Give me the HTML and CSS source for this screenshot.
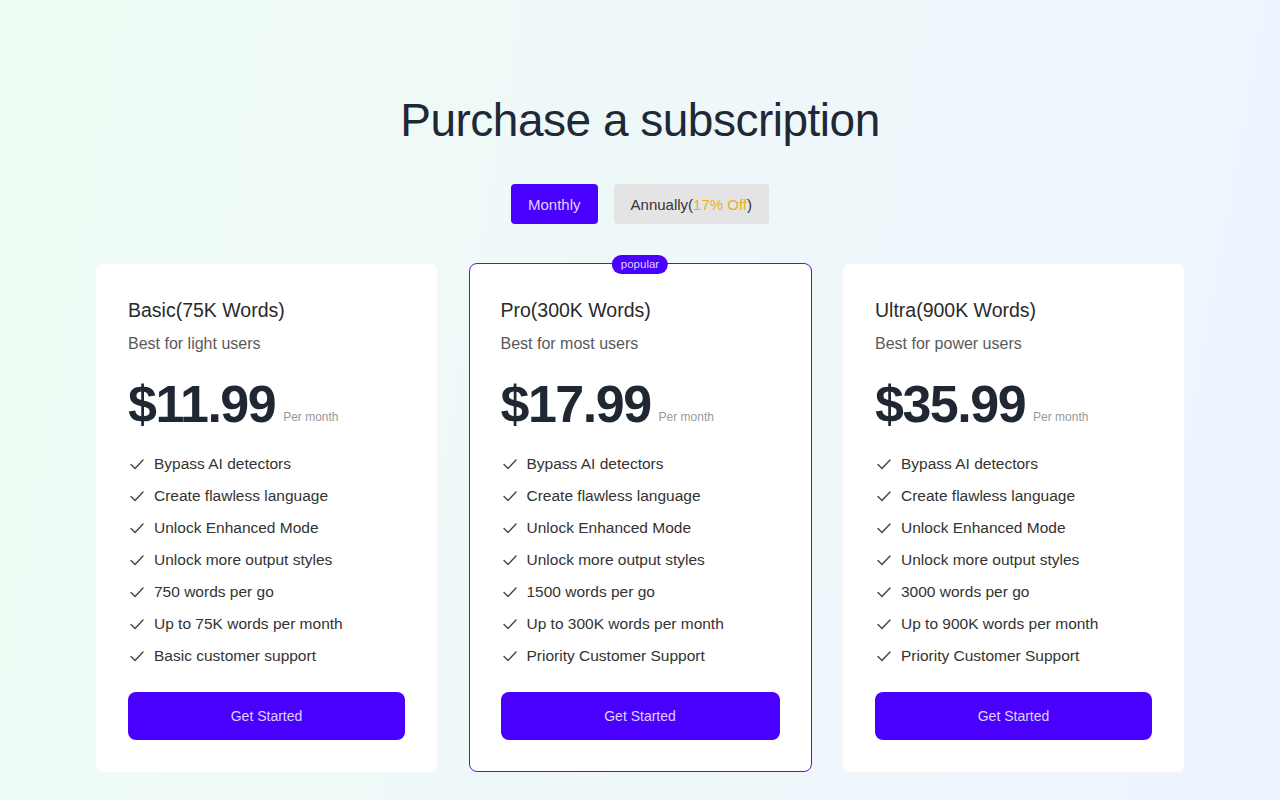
FILE: index.html
```html
<!DOCTYPE html>
<html lang="en">
<head>
  <meta charset="UTF-8" />
  <meta name="viewport" content="width=device-width, initial-scale=1.0"/>
  <title>Purchase a subscription</title>
  <link rel="stylesheet" href="styles.css">
</head>
<body>

  <div class="page">
    <h1 class="title">Purchase a subscription</h1>

    <!-- Billing period switch -->
    <div class="period">
      <button class="period-btn active">Monthly</button>
      <button class="period-btn">Annually(<span class="off">17% Off</span>)</button>
    </div>

    <div class="plans">

      <div class="plan">
        <div class="plan-name">Basic(75K Words)</div>
        <div class="plan-desc">Best for light users</div>
        <div class="price"><span class="amount">$11.99</span><span class="per">Per month</span></div>
        <ul class="features">
          <li><svg viewBox="0 0 16 16"><polyline points="2,8.5 6,12.5 14,4"/></svg>Bypass AI detectors</li>
          <li><svg viewBox="0 0 16 16"><polyline points="2,8.5 6,12.5 14,4"/></svg>Create flawless language</li>
          <li><svg viewBox="0 0 16 16"><polyline points="2,8.5 6,12.5 14,4"/></svg>Unlock Enhanced Mode</li>
          <li><svg viewBox="0 0 16 16"><polyline points="2,8.5 6,12.5 14,4"/></svg>Unlock more output styles</li>
          <li><svg viewBox="0 0 16 16"><polyline points="2,8.5 6,12.5 14,4"/></svg>750 words per go</li>
          <li><svg viewBox="0 0 16 16"><polyline points="2,8.5 6,12.5 14,4"/></svg>Up to 75K words per month</li>
          <li><svg viewBox="0 0 16 16"><polyline points="2,8.5 6,12.5 14,4"/></svg>Basic customer support</li>
        </ul>
        <button class="start-btn">Get Started</button>
      </div>

      <div class="plan popular">
        <span class="badge">popular</span>
        <div class="plan-name">Pro(300K Words)</div>
        <div class="plan-desc">Best for most users</div>
        <div class="price"><span class="amount">$17.99</span><span class="per">Per month</span></div>
        <ul class="features">
          <li><svg viewBox="0 0 16 16"><polyline points="2,8.5 6,12.5 14,4"/></svg>Bypass AI detectors</li>
          <li><svg viewBox="0 0 16 16"><polyline points="2,8.5 6,12.5 14,4"/></svg>Create flawless language</li>
          <li><svg viewBox="0 0 16 16"><polyline points="2,8.5 6,12.5 14,4"/></svg>Unlock Enhanced Mode</li>
          <li><svg viewBox="0 0 16 16"><polyline points="2,8.5 6,12.5 14,4"/></svg>Unlock more output styles</li>
          <li><svg viewBox="0 0 16 16"><polyline points="2,8.5 6,12.5 14,4"/></svg>1500 words per go</li>
          <li><svg viewBox="0 0 16 16"><polyline points="2,8.5 6,12.5 14,4"/></svg>Up to 300K words per month</li>
          <li><svg viewBox="0 0 16 16"><polyline points="2,8.5 6,12.5 14,4"/></svg>Priority Customer Support</li>
        </ul>
        <button class="start-btn">Get Started</button>
      </div>

      <div class="plan">
        <div class="plan-name">Ultra(900K Words)</div>
        <div class="plan-desc">Best for power users</div>
        <div class="price"><span class="amount">$35.99</span><span class="per">Per month</span></div>
        <ul class="features">
          <li><svg viewBox="0 0 16 16"><polyline points="2,8.5 6,12.5 14,4"/></svg>Bypass AI detectors</li>
          <li><svg viewBox="0 0 16 16"><polyline points="2,8.5 6,12.5 14,4"/></svg>Create flawless language</li>
          <li><svg viewBox="0 0 16 16"><polyline points="2,8.5 6,12.5 14,4"/></svg>Unlock Enhanced Mode</li>
          <li><svg viewBox="0 0 16 16"><polyline points="2,8.5 6,12.5 14,4"/></svg>Unlock more output styles</li>
          <li><svg viewBox="0 0 16 16"><polyline points="2,8.5 6,12.5 14,4"/></svg>3000 words per go</li>
          <li><svg viewBox="0 0 16 16"><polyline points="2,8.5 6,12.5 14,4"/></svg>Up to 900K words per month</li>
          <li><svg viewBox="0 0 16 16"><polyline points="2,8.5 6,12.5 14,4"/></svg>Priority Customer Support</li>
        </ul>
        <button class="start-btn">Get Started</button>
      </div>

    </div>
  </div>

</body>
</html>
```

FILE: styles.css
```css
body {
  margin: 0;
  min-height: 100vh;
  font-family: "Liberation Sans", Arial, sans-serif;
  background: linear-gradient(100deg, #effdf4 0%, #eff8f9 45%, #eef4fe 100%);
  color: #222;
}

.page {
  width: 1088px;
  margin: 0 auto;
  padding-top: 92px;
  display: flex;
  flex-direction: column;
  align-items: center;
}

.title {
  margin: 0;
  font-size: 46px;
  line-height: 56px;
  font-weight: 400;
  letter-spacing: -0.5px;
  color: #1e2836;
}

.period {
  display: flex;
  gap: 16px;
  margin-top: 36px;
}

.period-btn {
  height: 40px;
  padding: 0 17px;
  border: none;
  border-radius: 4px;
  background-color: #e4e4e4;
  color: #333;
  font-family: inherit;
  font-size: 15px;
  cursor: pointer;
}

.period-btn.active {
  background-color: #4a00ff;
  color: #ddd3ff;
}

.off {
  color: #e6b31e;
}

.plans {
  width: 100%;
  display: grid;
  grid-template-columns: 341px 343px 341px;
  justify-content: space-between;
  margin-top: 40px;
}

.plan {
  position: relative;
  background-color: #fff;
  border-radius: 6px;
  padding: 32px;
  display: flex;
  flex-direction: column;
}

.plan.popular {
  border: 1px solid #5c12e6;
  border-radius: 8px;
  margin-top: -1px;
  padding: 32px 31px 31px 31px;
}

.badge {
  position: absolute;
  top: -9px;
  left: 50%;
  transform: translateX(-50%);
  height: 19px;
  line-height: 19px;
  padding: 0 9px;
  border-radius: 10px;
  background-color: #4a00ff;
  color: #ddd3ff;
  font-size: 11.5px;
}

.plan-name {
  font-size: 19.5px;
  line-height: 28px;
  color: #2a2a2a;
}

.plan-desc {
  margin-top: 8px;
  font-size: 16px;
  line-height: 24px;
  color: #5a5a5a;
}

.price {
  margin-top: 20px;
  display: flex;
  align-items: baseline;
  height: 56px;
}

.amount {
  font-size: 52px;
  line-height: 56px;
  font-weight: 700;
  letter-spacing: -1.5px;
  color: #1f2733;
}

.per {
  margin-left: 8px;
  font-size: 12px;
  color: #999;
  position: relative;
  top: -1px;
}

.features {
  list-style: none;
  margin: 16px 0 0;
  padding: 0;
}

.features li {
  display: flex;
  align-items: center;
  height: 32px;
  font-size: 15.5px;
  color: #333;
}

.features svg {
  width: 16px;
  height: 16px;
  margin: 0 9px 0 1px;
  fill: none;
  stroke: #444;
  stroke-width: 1.4;
  stroke-linecap: round;
  stroke-linejoin: round;
}

.start-btn {
  margin-top: 20px;
  height: 48px;
  border: none;
  border-radius: 8px;
  background-color: #4a00ff;
  color: #ddd3ff;
  font-family: inherit;
  font-size: 14px;
  cursor: pointer;
}

.start-btn:hover {
  background-color: #3f00dd;
}
```
